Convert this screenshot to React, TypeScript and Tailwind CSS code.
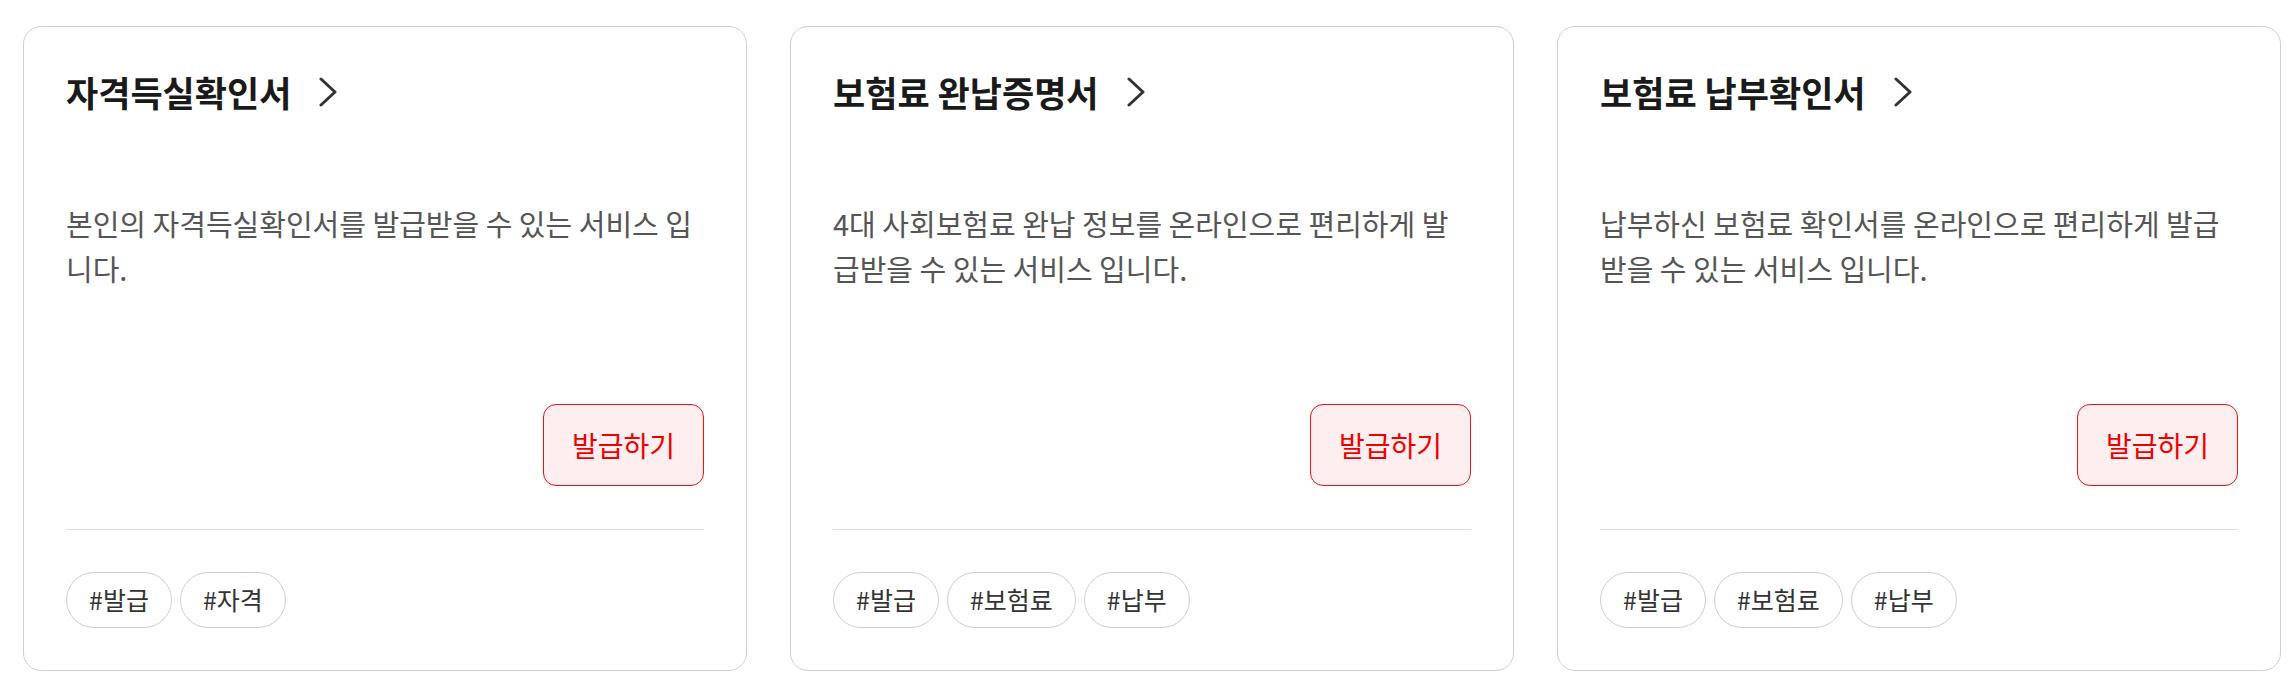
import React from "react";

type Card = { title: string; desc: string; tags: string[] };

const cards: Card[] = [
  {
    title: "자격득실확인서",
    desc: "본인의 자격득실확인서를 발급받을 수 있는 서비스 입니다.",
    tags: ["#발급", "#자격"],
  },
  {
    title: "보험료 완납증명서",
    desc: "4대 사회보험료 완납 정보를 온라인으로 편리하게 발급받을 수 있는 서비스 입니다.",
    tags: ["#발급", "#보험료", "#납부"],
  },
  {
    title: "보험료 납부확인서",
    desc: "납부하신 보험료 확인서를 온라인으로 편리하게 발급받을 수 있는 서비스 입니다.",
    tags: ["#발급", "#보험료", "#납부"],
  },
];

function Chevron() {
  return (
    <svg width="20" height="30" viewBox="0 0 20 30" fill="none" className="shrink-0">
      <polyline
        points="3,2 17,15 3,28"
        stroke="#333333"
        strokeWidth="3"
        strokeLinecap="round"
        strokeLinejoin="round"
        fill="none"
      />
    </svg>
  );
}

function ServiceCard({ card }: { card: Card }) {
  return (
    <div className="flex h-[645px] w-[724px] shrink-0 flex-col rounded-[18px] border border-[#cfcfcf] bg-white p-[42px]">
      <div className="flex items-center gap-[27px]">
        <h2 className="text-[35px] font-bold leading-[46px] text-[#1a1a1a]">{card.title}</h2>
        <Chevron />
      </div>
      <p className="mt-[86px] mr-[6px] text-[29px] leading-[45px] text-[#555555]">{card.desc}</p>
      <div className="mt-auto flex justify-end">
        <button className="flex h-[82px] w-[161px] items-center justify-center rounded-[13px] border border-[#ee1111] bg-[#fdeff0] text-[28px] text-[#ee0000]">
          발급하기
        </button>
      </div>
      <div className="mt-[43px] flex gap-[8px] border-t border-[#dddddd] pt-[42px]">
        {card.tags.map((t) => (
          <span
            key={t}
            className="flex h-[56px] items-center rounded-full border border-[#cccccc] px-[22px] text-[25px] text-[#333333]"
          >
            {t}
          </span>
        ))}
      </div>
    </div>
  );
}

export default function App() {
  return (
    <div
      className="flex h-[681px] w-[2294px] gap-[43px] bg-white pl-[23px] pt-[26px]"
      style={{ fontFamily: '"Noto Sans CJK KR", "Noto Sans", sans-serif' }}
    >
      {cards.map((c) => (
        <ServiceCard key={c.title} card={c} />
      ))}
    </div>
  );
}
